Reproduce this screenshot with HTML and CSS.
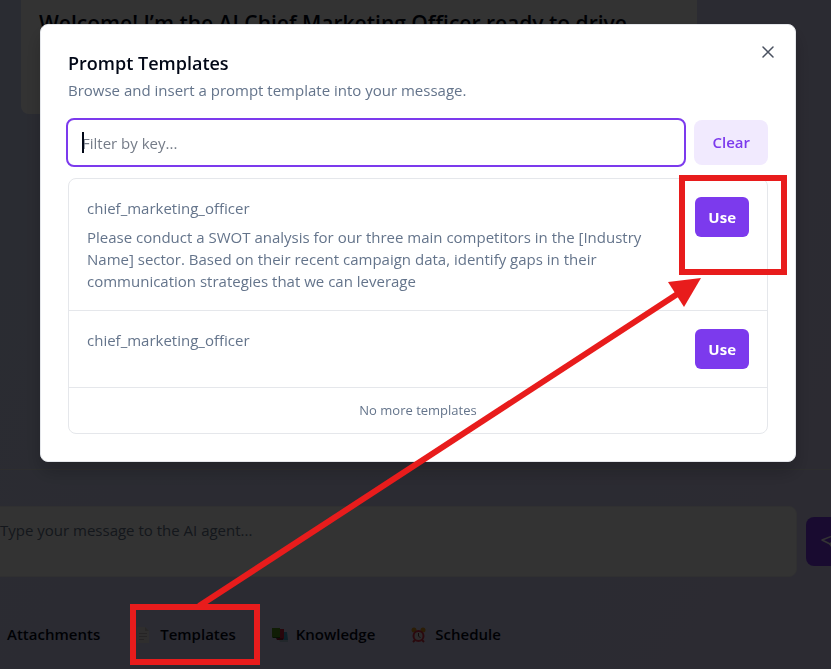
FILE: index.html
```
<!DOCTYPE html>
<html lang="en">
<head>
    <meta charset="UTF-8">
    <meta name="viewport" content="width=device-width, initial-scale=1.0">
    <title>Prompt Templates</title>
    <link rel="stylesheet" href="styles.css">
</head>
<body>

<div class="page">
    <main class="chat">
        <div class="welcome">
            <h1>Welcome! I’m the AI Chief Marketing Officer ready to drive</h1>
        </div>
    </main>

    <footer class="composer">
        <div class="composer-row">
            <textarea class="message" aria-label="Message" placeholder="Type your message to the AI agent..."></textarea>
            <button class="send" type="button" aria-label="Send">
                <svg width="24" height="24" viewBox="0 0 24 24" fill="none" stroke="currentColor" stroke-width="1.5" stroke-linejoin="round" stroke-linecap="round">
                    <path d="M1 10L22 2L14 22L9 14Z"/>
                    <path d="M9 14L22 2"/>
                </svg>
            </button>
        </div>
        <div class="tools">
            <button class="tool" type="button">Attachments</button>
            <button class="tool" type="button">
                <svg width="16" height="16" viewBox="0 0 16 16">
                    <path fill="#e8e4e4" d="M1 0h8l4 4v12H1z"/>
                    <path fill="#c8c2c4" d="M9 0v4h4z"/>
                    <path stroke="#bcb6ba" d="M3 6.5h8M3 9.500h8M3 12.500h5"/>
                </svg>
                Templates
            </button>
            <button class="tool" type="button">
                <svg width="16" height="16" viewBox="0 0 16 16">
                    <path fill="#3f9fc8" d="M8 5h7l1 8H9z"/>
                    <path fill="#a8c4d8" d="M7 13h9v2H8z"/>
                    <path fill="#c8203c" d="M6 2h6v10H6z"/>
                    <path fill="#8a1830" d="M4 11h7v2H5z"/>
                    <path fill="#4f901c" d="M0 1h8v9H0z"/>
                    <path fill="#1f5a10" d="M0 10h8v1H1z"/>
                </svg>
                Knowledge
            </button>
            <button class="tool" type="button">
                <svg width="16" height="16" viewBox="0 0 16 16">
                    <circle cx="3" cy="3" r="2.5" fill="#d89020"/>
                    <circle cx="12" cy="3" r="2.5" fill="#d89020"/>
                    <path stroke="#c43040" stroke-width="2" d="M4 13l-2 2M11 13l2 2"/>
                    <circle cx="7.5" cy="9" r="5" fill="#e0d4dc" stroke="#d83048" stroke-width="2"/>
                    <path stroke="#604048" fill="none" d="M7.500 6v3l2 2"/>
                </svg>
                Schedule
            </button>
        </div>
    </footer>
</div>

<div class="overlay">
    <section class="dialog" role="dialog" aria-modal="true" aria-labelledby="dialog-title">
        <button class="close" type="button" aria-label="Close">
            <svg width="12" height="12" viewBox="0 0 12 12" stroke="currentColor" stroke-width="1.5" stroke-linecap="round">
                <path d="M1 1l10 10M11 1L1 11"/>
            </svg>
        </button>
        <h2 id="dialog-title">Prompt Templates</h2>
        <p class="subtitle">Browse and insert a prompt template into your message.</p>

        <div class="filter-row">
            <div class="filter">
                <input type="text" aria-label="Filter by key" placeholder="Filter by key...">
                <span class="caret"></span>
            </div>
            <button class="clear" type="button">Clear</button>
        </div>

        <div class="templates">
            <div class="template">
                <div class="template-text">
                    <p class="key">chief_marketing_officer</p>
                    <p class="prompt">Please conduct a SWOT analysis for our three main competitors in the [Industry Name] sector. Based on their recent campaign data, identify gaps in their communication strategies that we can leverage</p>
                </div>
                <button class="use" type="button">Use</button>
            </div>
            <div class="template">
                <div class="template-text">
                    <p class="key">chief_marketing_officer</p>
                </div>
                <button class="use" type="button">Use</button>
            </div>
            <p class="end">No more templates</p>
        </div>
    </section>
</div>

<!-- Red callouts: toolbar button to the Use button -->
<svg class="callouts" width="831" height="669" viewBox="0 0 831 669" fill="none" stroke="#e81c1c" stroke-width="6">
    <path d="M199 606L682 291"/>
    <path fill="#e81c1c" stroke="none" d="M701 278L668 282L684 307z"/>
    <rect x="682" y="178" width="102" height="94"/>
    <rect x="133" y="607" width="124" height="55"/>
</svg>

</body>
</html>
```
FILE: styles.css
```
* {
    box-sizing: border-box;
    margin: 0;
    padding: 0;
}

body {
    font-family: "Segoe UI", "Open Sans", "Noto Sans", sans-serif;
    font-size: 15px;
    line-height: 23px;
    color: #020817;
    overflow: hidden;
}

button, input, textarea {
    font: inherit;
    border: none;
}

button {
    cursor: pointer;
}

.page {
    display: flex;
    flex-direction: column;
    height: 100vh;
    background: linear-gradient(120deg, #d2dafa, #dad4fa);
}

.chat {
    flex: 1;
    padding: 0 134px 0 21px;
}

.welcome {
    height: 114px;
    padding: 8px 18px;
    background: #fff;
    border-radius: 0 0 8px 8px;
}

.welcome h1 {
    font-size: 21px;
    line-height: 30px;
    font-weight: 600;
    white-space: nowrap;
}

.composer {
    height: 200px;
    padding-top: 36px;
    border-top: 1px solid #e5e7eb;
    overflow: hidden;
}

.composer-row {
    display: flex;
    align-items: center;
    gap: 9px;
    margin: 0 -35px 0 -17px;
}

.message {
    flex: 1;
    height: 71px;
    padding: 12px 16px;
    background: #fff;
    border: 1px solid #f0f0f4;
    border-radius: 8px;
    resize: none;
}

.message::placeholder {
    color: #64748b;
}

.send {
    width: 60px;
    height: 49px;
    padding-left: 15px;
    color: #fff;
    background: #7c3aed;
    border-radius: 8px;
}

.send svg {
    display: block;
}

.tools {
    display: flex;
    gap: 36px;
    padding: 46px 7px 0;
}

.tool {
    display: flex;
    align-items: center;
    gap: 8px;
    font-weight: 600;
    color: #020817;
    background: none;
}

.overlay {
    position: fixed;
    inset: 0;
    padding: 24px 35px 0 40px;
    background: rgba(0, 0, 0, 0.8);
}

.dialog {
    position: relative;
    padding: 26px 27px 27px;
    background: #fff;
    border: 1px solid #e5e7eb;
    border-radius: 8px;
    box-shadow: 0 10px 20px rgba(0, 0, 0, 0.2);
}

.close {
    position: absolute;
    top: 21px;
    right: 21px;
    color: #4a5160;
    background: none;
}

.close svg {
    display: block;
}

.dialog h2 {
    font-size: 18px;
    line-height: 24px;
    font-weight: 600;
}

.subtitle {
    margin: 4px 0 16px;
    color: #64748b;
}

.filter-row {
    display: flex;
    align-items: center;
    gap: 8px;
    margin-left: -2px;
}

.filter {
    position: relative;
    flex: 1;
}

.filter input {
    display: block;
    width: 100%;
    height: 49px;
    padding: 0 14px;
    border: 2px solid #7c3aed;
    border-radius: 8px;
    outline: none;
}

.filter input::placeholder {
    color: #757c88;
}

.caret {
    position: absolute;
    top: 14px;
    left: 16px;
    width: 2px;
    height: 21px;
    background: #020817;
}

.clear {
    height: 45px;
    padding: 0 18px;
    font-weight: 600;
    color: #7c3aed;
    background: #f1eafe;
    border-radius: 8px;
}

.templates {
    margin-top: 11px;
    border: 1px solid #e5e7eb;
    border-radius: 8px;
}

.template {
    display: flex;
    align-items: flex-start;
    gap: 40px;
    padding: 18px;
    border-bottom: 1px solid #e5e7eb;
}

.template-text {
    flex: 1;
    color: #64748b;
}

.key {
    margin-bottom: 6px;
}

.prompt {
    line-height: 22px;
}

.use {
    height: 40px;
    padding: 0 13px;
    font-weight: 700;
    color: #fff;
    background: #7c3aed;
    border-radius: 6px;
}

.end {
    padding: 11px;
    font-size: 13px;
    text-align: center;
    color: #64748b;
}

.callouts {
    position: absolute;
    top: 0;
    left: 0;
    pointer-events: none;
}
```
